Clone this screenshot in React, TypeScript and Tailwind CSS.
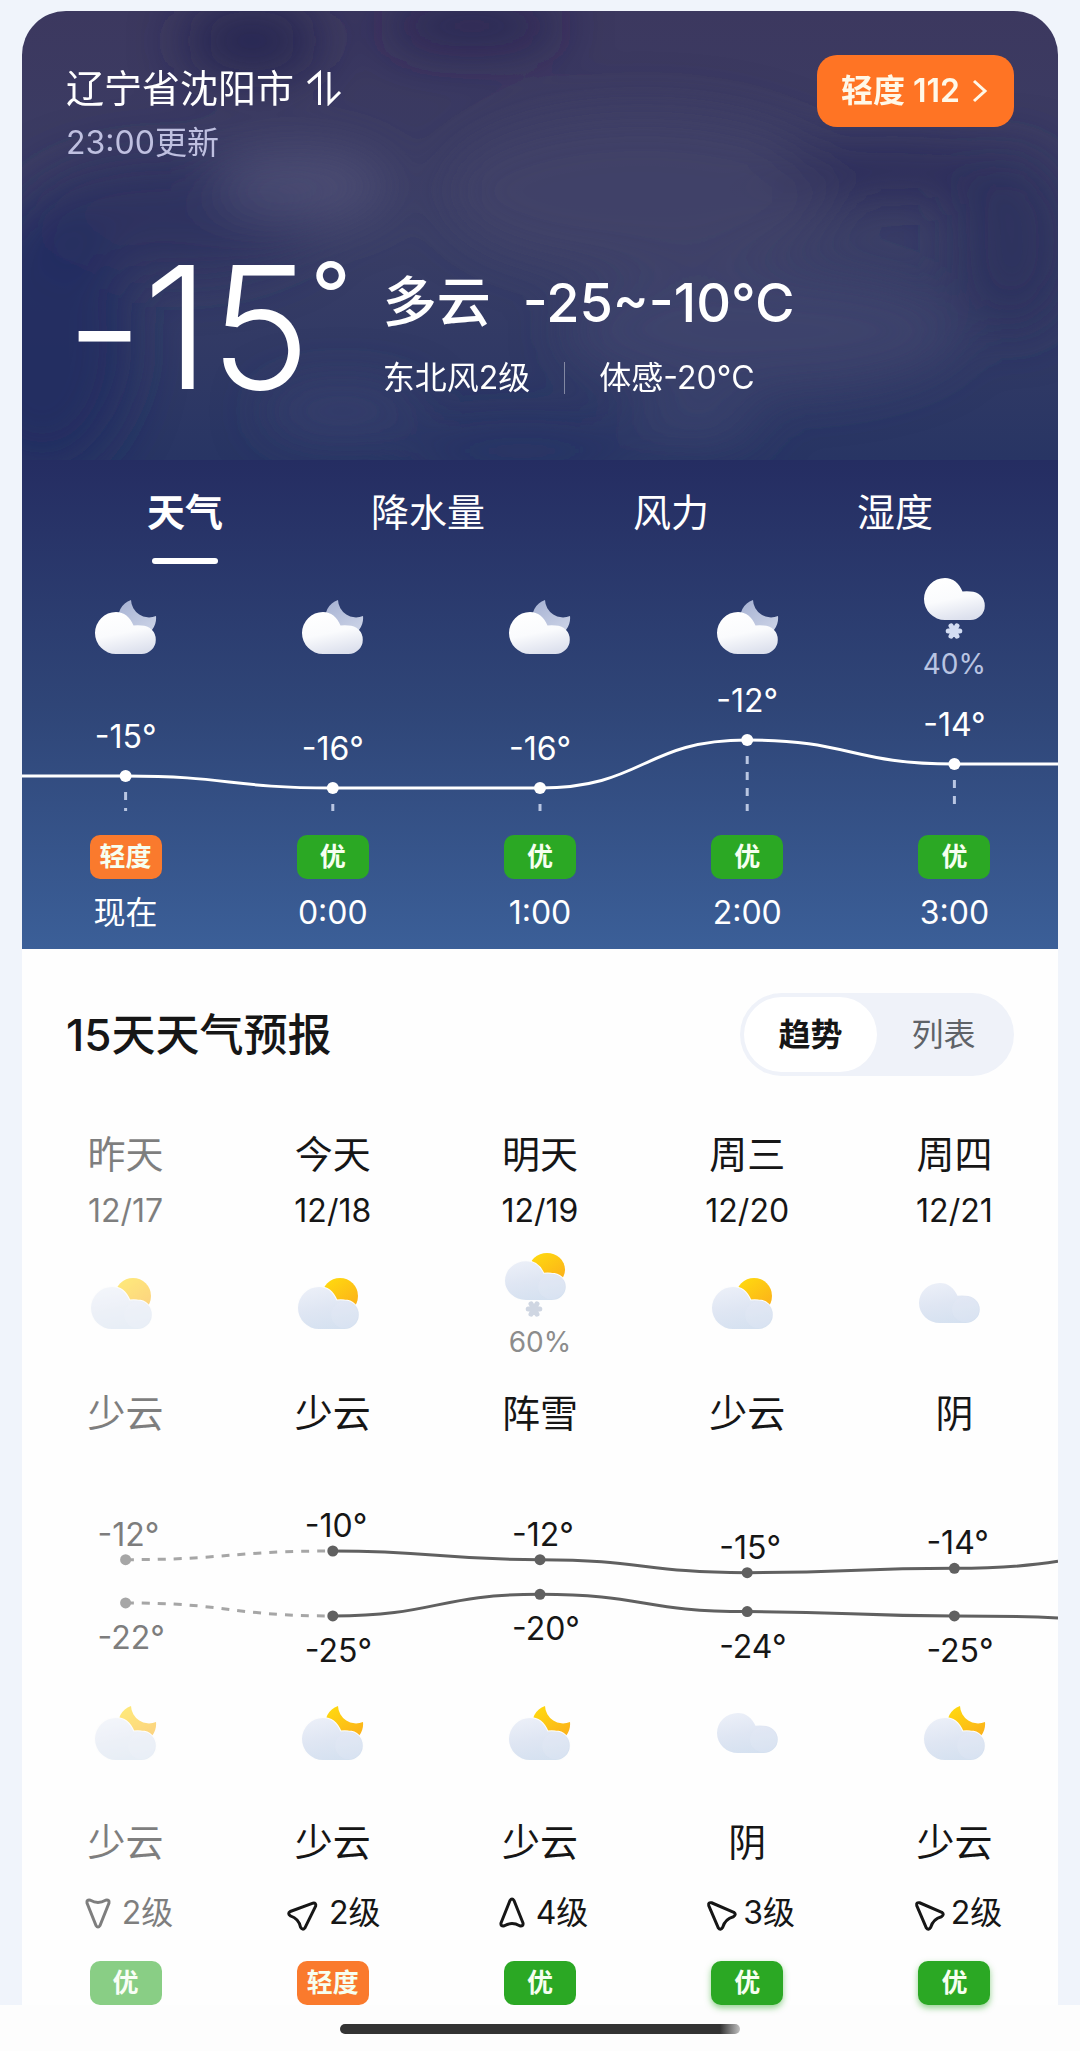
import { useId, useState } from 'react';

type Air = 'good' | 'light';
type IconKind = 'night' | 'snow' | 'day' | 'daySnow' | 'overcast' | 'moon';

interface Hour {
  time: string;
  temp: number;
  icon: IconKind;
  chance?: string;
  air: Air;
}

interface Day {
  name: string;
  date: string;
  icon: IconKind;
  chance?: string;
  text: string;
  high: number;
  low: number;
  nightIcon: IconKind;
  nightText: string;
  wind: string;
  angle: number;
  air: Air;
  past?: boolean;
  glow?: boolean;
}

const HOURS: Hour[] = [
  { time: '现在', temp: -15, icon: 'night', air: 'light' },
  { time: '0:00', temp: -16, icon: 'night', air: 'good' },
  { time: '1:00', temp: -16, icon: 'night', air: 'good' },
  { time: '2:00', temp: -12, icon: 'night', air: 'good' },
  { time: '3:00', temp: -14, icon: 'snow', chance: '40%', air: 'good' },
];

const DAYS: Day[] = [
  { name: '昨天', date: '12/17', icon: 'day', text: '少云', high: -12, low: -22, nightIcon: 'moon', nightText: '少云', wind: '2级', angle: 180, air: 'good', past: true },
  { name: '今天', date: '12/18', icon: 'day', text: '少云', high: -10, low: -25, nightIcon: 'moon', nightText: '少云', wind: '2级', angle: 48, air: 'light' },
  { name: '明天', date: '12/19', icon: 'daySnow', chance: '60%', text: '阵雪', high: -12, low: -20, nightIcon: 'moon', nightText: '少云', wind: '4级', angle: 0, air: 'good' },
  { name: '周三', date: '12/20', icon: 'day', text: '少云', high: -15, low: -24, nightIcon: 'overcast', nightText: '阴', wind: '3级', angle: -45, air: 'good', glow: true },
  { name: '周四', date: '12/21', icon: 'overcast', text: '阴', high: -14, low: -25, nightIcon: 'moon', nightText: '少云', wind: '2级', angle: -45, air: 'good', glow: true },
];

const TABS = ['天气', '降水量', '风力', '湿度'];

// Chart geometry, in viewBox units
const CHART_W = 1036;
const COL = CHART_W / 5;
const colX = (i: number) => COL * (i + 0.5);

// Cubic segments with flat tangents at each point
function curve(points: [number, number][]) {
  return points
    .map(([x, y], i) => {
      if (i === 0) return `M${x} ${y}`;
      const [px, py] = points[i - 1];
      const mid = (px + x) / 2;
      return `C${mid} ${py} ${mid} ${y} ${x} ${y}`;
    })
    .join(' ');
}

const CLOUD = 'M22 12 C30 12 36 17 39.5 25.5 Q43 25 47.5 25.4 A14.3 14.3 0 0 1 47.5 54 H22 A21 21 0 0 1 22 12 Z';

function Snowflake({ color }: { color: string }) {
  return (
    <svg viewBox="0 0 18 18" className="h-[18px] w-[18px]" stroke={color} strokeWidth="5" strokeLinecap="round" aria-hidden="true">
      <path d="M9 9 L14.8 9 M9 9 L12 3.8 M9 9 L6 3.8 M9 9 L3.2 9 M9 9 L6 14.2 M9 9 L12 14.2" />
    </svg>
  );
}

function WeatherIcon({ kind, dark = false }: { kind: IconKind; dark?: boolean }) {
  const id = useId();
  const cloudId = `${id}-cloud`;
  const lightId = `${id}-light`;
  const sunny = kind === 'day' || kind === 'daySnow';
  const moon = kind === 'night' || kind === 'moon';

  const box = moon
    ? { view: '0 0 63 54', cls: 'h-[54px] w-[63px]' }
    : sunny
      ? { view: '0 3 62 51', cls: kind === 'day' ? 'h-[51px] w-[62px]' : 'h-[47px] w-[62px]' }
      : { view: '0 12 62 42', cls: kind === 'snow' ? 'h-[42px] w-[62px]' : 'h-[40px] w-[62px]' };

  return (
    <svg viewBox={box.view} className={box.cls} preserveAspectRatio="none" aria-hidden="true">
      <defs>
        <linearGradient id={cloudId} x1="0.3" y1="0" x2="0.6" y2="1">
          <stop offset="0" stopColor={dark ? '#ffffff' : '#ebeff8'} />
          <stop offset="0.5" stopColor={dark ? '#fafbfd' : '#dfe6f3'} />
          <stop offset="1" stopColor={dark ? '#dce0ed' : '#d5e1f0'} />
        </linearGradient>
        <linearGradient id={lightId} x1="0.2" y1="0" x2="0.9" y2="1">
          <stop offset="0" stopColor={dark ? '#a9b4d4' : '#ffd90f'} />
          <stop offset="1" stopColor={dark ? '#d0d7e9' : '#fbab1c'} />
        </linearGradient>
      </defs>
      {moon && <path d="M37 0 A19 19 0 1 0 62 16 A18 18 0 0 1 37 0 Z" fill={`url(#${lightId})`} />}
      {sunny && <circle cx="43" cy="21" r="18" fill={`url(#${lightId})`} />}
      {!dark && (moon || sunny) && <path d={CLOUD} fill="none" stroke="#fdfdfd" strokeWidth="2" />}
      <path d={CLOUD} fill={`url(#${cloudId})`} />
      {!dark && <circle cx="47.5" cy="39.7" r="13.5" fill="#e6ebf7" opacity="0.25" />}
    </svg>
  );
}

function IconCell({ kind, chance, dark }: { kind: IconKind; chance?: string; dark?: boolean }) {
  return (
    <div className={`flex h-[110px] flex-col items-center justify-center ${chance ? 'pt-1' : ''}`}>
      <div className={dark ? '' : 'pr-[10px]'}>
        <WeatherIcon kind={kind} dark={dark} />
      </div>
      {chance && (
        <>
          <div className={dark ? 'mt-[2px]' : 'pr-[12px]'}>
            <Snowflake color={dark ? '#d3ddf3' : '#cfd6e2'} />
          </div>
          <span className={`mt-2 text-[28px] leading-8 ${dark ? 'text-[#b9c4e2]' : 'text-[#8c8c8c]'}`}>{chance}</span>
        </>
      )}
    </div>
  );
}

function AirBadge({ air, glow }: { air: Air; glow?: boolean }) {
  return (
    <span
      className={`flex h-11 w-[72px] items-center justify-center rounded-[10px] text-[26px] font-bold leading-none text-[#f6fff0] ${
        air === 'good' ? 'bg-[#2ba824]' : 'bg-[#fa7a2d]'
      } ${glow ? 'shadow-[0_3px_6px_rgba(43,168,36,0.5)]' : ''}`}
    >
      {air === 'good' ? '优' : '轻度'}
    </span>
  );
}

function WindArrow({ angle }: { angle: number }) {
  return (
    <svg
      viewBox="0 0 32 32"
      className="h-8 w-8"
      style={{ transform: `rotate(${angle}deg)` }}
      fill="none"
      stroke="currentColor"
      strokeWidth="3"
      strokeLinejoin="round"
      aria-hidden="true"
    >
      <path d="M14 3.5 Q16 0.5 18 3.5 L27 26 Q27.6 29.6 23.6 28.8 Q16 24.4 8.4 28.8 Q4.4 29.6 5 26 Z" />
    </svg>
  );
}

function Sky() {
  return (
    <svg viewBox="0 0 1036 449" preserveAspectRatio="none" className="absolute inset-0 h-full w-full" aria-hidden="true">
      <defs>
        <filter id="haze" x="-50%" y="-50%" width="200%" height="200%">
          <feGaussianBlur stdDeviation="26" />
        </filter>
      </defs>
      <g filter="url(#haze)">
        <ellipse cx="230" cy="30" rx="70" ry="40" fill="#28264f" opacity="0.8" />
        <ellipse cx="450" cy="15" rx="90" ry="24" fill="#262350" opacity="0.8" />
        <ellipse cx="150" cy="205" rx="150" ry="60" fill="#2b2f5f" opacity="0.8" />
        <ellipse cx="20" cy="330" rx="90" ry="130" fill="#202d60" opacity="0.8" />
        <ellipse cx="280" cy="175" rx="90" ry="36" fill="#54547a" opacity="0.7" />
        <ellipse cx="620" cy="180" rx="200" ry="80" fill="#454669" opacity="0.6" />
        <ellipse cx="870" cy="160" rx="120" ry="22" fill="#292a57" opacity="0.9" />
        <ellipse cx="990" cy="230" rx="60" ry="90" fill="#2b2f5c" opacity="0.8" />
        <ellipse cx="740" cy="320" rx="200" ry="60" fill="#44486f" opacity="0.6" />
        <ellipse cx="320" cy="400" rx="80" ry="24" fill="#3b4470" opacity="0.7" />
        <ellipse cx="500" cy="440" rx="120" ry="24" fill="#263566" opacity="0.7" />
        <ellipse cx="670" cy="410" rx="70" ry="20" fill="#444a72" opacity="0.7" />
      </g>
    </svg>
  );
}

function HourlyChart() {
  const y = (t: number) => 49 + (-12 - t) * 12;
  const pts = HOURS.map((h, i): [number, number] => [colX(i), y(h.temp)]);
  const line = curve([[0, pts[0][1]], ...pts, [CHART_W, pts[4][1]]]);

  return (
    <svg viewBox="0 0 1036 124" className="block w-full overflow-visible" role="img" aria-label="逐小时气温">
      {pts.map(([x, py], i) => (
        <g key={HOURS[i].time}>
          <line x1={x} x2={x} y1={py + 16} y2="120" stroke="#b9c6e2" strokeWidth="3" strokeDasharray="8 8" />
          <text x={x} y={py - 28} textAnchor="middle" fontSize="32" fill="#fff">
            {HOURS[i].temp}°
          </text>
        </g>
      ))}
      <path d={line} fill="none" stroke="#fff" strokeWidth="3" />
      {pts.map(([x, py], i) => (
        <circle key={i} cx={x} cy={py} r="6" fill="#fff" />
      ))}
    </svg>
  );
}

function DailyChart() {
  const y = (t: number) => 51 + (-10 - t) * 4.33;
  const highs = DAYS.map((d, i): [number, number] => [colX(i), y(d.high)]);
  const lows = DAYS.map((d, i): [number, number] => [colX(i), y(d.low)]);
  const lineEnd = (p: [number, number], dy: number) => ` Q${p[0] + 60} ${p[1]} ${CHART_W} ${p[1] + dy}`;

  return (
    <svg viewBox="0 0 1036 180" className="block w-full" role="img" aria-label="每日最高和最低气温">
      <g fill="none" strokeWidth="3">
        <path d={curve(highs.slice(0, 2))} stroke="#a6a6a6" strokeDasharray="8 8" />
        <path d={curve(lows.slice(0, 2))} stroke="#a6a6a6" strokeDasharray="8 8" />
        <path d={curve(highs.slice(1)) + lineEnd(highs[4], -7)} stroke="#606060" />
        <path d={curve(lows.slice(1)) + lineEnd(lows[4], 2)} stroke="#606060" />
      </g>
      {DAYS.map((d, i) => (
        <g key={d.date} fontSize="32" fill={d.past ? '#7d7d7d' : '#161616'}>
          <circle cx={colX(i)} cy={highs[i][1]} r="5.5" fill={d.past ? '#a6a6a6' : '#606060'} />
          <circle cx={colX(i)} cy={lows[i][1]} r="5.5" fill={d.past ? '#a6a6a6' : '#606060'} />
          <text x={colX(i) - 28} y={highs[i][1] - 14}>{d.high}°</text>
          <text x={colX(i) - 28} y={lows[i][1] + 46}>{d.low}°</text>
        </g>
      ))}
    </svg>
  );
}

export default function App() {
  const [tab, setTab] = useState('天气');
  const [view, setView] = useState('趋势');

  return (
    <div className="bg-[#fdfdfd] font-['Inter','Noto_Sans_CJK_SC',sans-serif] text-[#161616]">
      <main className="bg-[#f0f4fb] px-[22px] pt-[11px]">
        {/* Current conditions */}
        <section className="overflow-hidden rounded-t-[44px] text-white">
          <div className="relative bg-gradient-to-b from-[#3c385f] via-[#3a3e66] to-[#283564] pb-12">
            <Sky />
            <header className="relative flex items-start justify-between px-11 pt-11">
              <div className="pt-2">
                <button className="flex items-center gap-3 text-[38px] leading-[50px]">
                  辽宁省沈阳市
                  <svg viewBox="0 0 36 36" className="h-9 w-9" fill="none" stroke="currentColor" strokeWidth="3" aria-hidden="true">
                    <path d="M2 13 L13.5 3 V35" />
                    <path d="M23 2 V33 L34 22" />
                  </svg>
                </button>
                <p className="mt-[10px] text-[32px] leading-10 text-[#bfc0e0]">23:00更新</p>
              </div>
              <button className="flex h-[72px] items-center gap-3 rounded-[20px] bg-[#ff7424] pl-6 pr-[26px] text-[32px] font-semibold leading-none text-[#fff8e8]">
                轻度 112
                <svg viewBox="0 0 16 24" className="h-6 w-4" fill="none" stroke="currentColor" strokeWidth="3" aria-hidden="true">
                  <path d="M2 2 L13 12 L2 22" />
                </svg>
              </button>
            </header>

            <div className="relative mt-[79px] flex items-center gap-8 px-11">
              <h1 className="flex items-start text-[170px] font-light leading-none [font-variant-ligatures:no-contextual]">
                -15<span className="mt-2 text-[88px] font-normal leading-none">°</span>
              </h1>
              <div className="pt-3">
                <p className="flex items-center gap-8 text-[54px] font-medium leading-[70px]">
                  <span>多云</span>
                  <span>-25~-10°C</span>
                </p>
                <p className="mt-5 flex items-center text-[32px] leading-10">
                  <span>东北风2级</span>
                  <span className="mx-[34px] h-8 w-px bg-white/40" />
                  <span>体感-20°C</span>
                </p>
              </div>
            </div>
          </div>

          {/* Hourly forecast */}
          <div className="bg-gradient-to-b from-[#252d62] via-[#2f4577] to-[#3b5f98] pb-4 pt-7">
            <div role="tablist" className="flex justify-between px-[125px]">
              {TABS.map((t) => (
                <button
                  key={t}
                  role="tab"
                  aria-selected={tab === t}
                  onClick={() => setTab(t)}
                  className={`flex flex-col items-center text-[38px] leading-[48px] ${tab === t ? 'font-bold' : ''}`}
                >
                  {t}
                  <span className={`mt-[22px] h-[6px] w-[66px] rounded-sm ${tab === t ? 'bg-white' : ''}`} />
                </button>
              ))}
            </div>

            <div className="mt-2 grid grid-cols-5">
              {HOURS.map((h) => (
                <IconCell key={h.time} kind={h.icon} chance={h.chance} dark />
              ))}
            </div>
            <div className="mt-[9px]">
              <HourlyChart />
            </div>
            <div className="mt-5 grid grid-cols-5">
              {HOURS.map((h) => (
                <div key={h.time} className="flex flex-col items-center">
                  <AirBadge air={h.air} />
                  <span className="mt-[14px] text-[32px] leading-10">{h.time}</span>
                </div>
              ))}
            </div>
          </div>
        </section>

        {/* 15-day forecast */}
        <section className="bg-[#fefefe] pt-11">
          <div className="flex items-center justify-between px-11">
            <h2 className="text-[44px] font-medium leading-[60px]">15天天气预报</h2>
            <div className="flex h-[83px] rounded-full bg-[#eff2f9] p-1">
              {['趋势', '列表'].map((v) => (
                <button
                  key={v}
                  onClick={() => setView(v)}
                  className={`w-[133px] rounded-full text-[32px] leading-10 ${
                    view === v ? 'bg-white font-bold text-[#161616]' : 'text-[#5f6368]'
                  }`}
                >
                  {v}
                </button>
              ))}
            </div>
          </div>

          <div className="mt-[54px] grid grid-cols-5">
            {DAYS.map((d) => (
              <div key={d.date} className={`flex flex-col items-center ${d.past ? 'opacity-55' : ''}`}>
                <span className="text-[38px] leading-[48px]">{d.name}</span>
                <span className="mt-[13px] text-[32px] leading-10">{d.date}</span>
                <div className="mt-[17px]">
                  <IconCell kind={d.icon} chance={d.chance} />
                </div>
                <span className="mt-[31px] text-[38px] leading-[48px]">{d.text}</span>
              </div>
            ))}
          </div>

          <div className="mt-[63px]">
            <DailyChart />
          </div>

          <div className="mt-[26px] grid grid-cols-5">
            {DAYS.map((d) => (
              <div key={d.date} className={`flex flex-col items-center ${d.past ? 'opacity-55' : ''}`}>
                <div className="flex h-[54px] items-center">
                  <WeatherIcon kind={d.nightIcon} />
                </div>
                <span className="mt-[58px] text-[38px] leading-[48px]">{d.nightText}</span>
                <span className="mt-[27px] flex items-center gap-2 pl-1 text-[32px] leading-10">
                  <WindArrow angle={d.angle} />
                  {d.wind}
                </span>
                <div className="mt-7">
                  <AirBadge air={d.air} glow={d.glow} />
                </div>
              </div>
            ))}
          </div>
        </section>
      </main>

      {/* Home indicator */}
      <div className="flex justify-center pb-[17px] pt-[19px]">
        <span className="h-[10px] w-[400px] rounded-full bg-gradient-to-r from-[#333] from-95% to-[#333]/30" />
      </div>
    </div>
  );
}
